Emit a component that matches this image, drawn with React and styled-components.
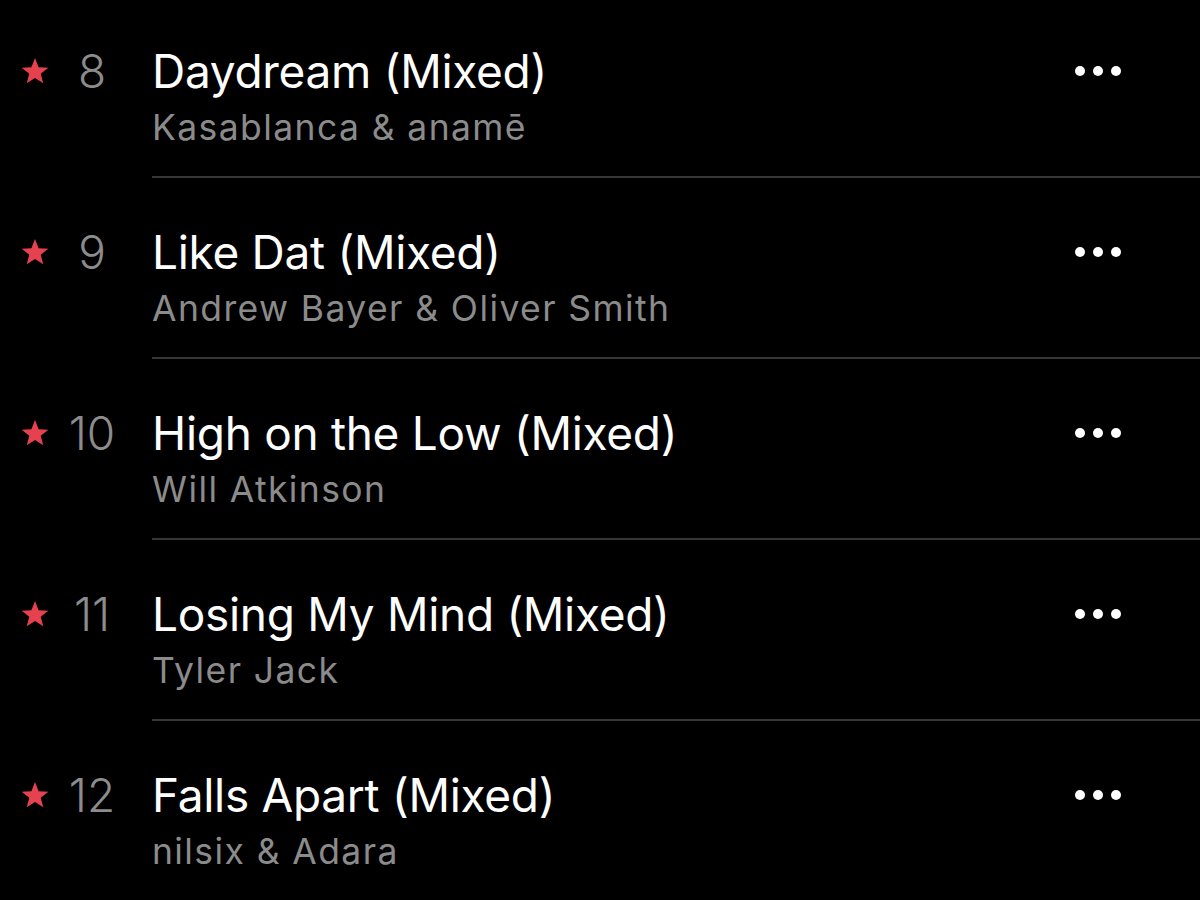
import styled, { createGlobalStyle } from "styled-components";

const GlobalStyle = createGlobalStyle`
  html, body {
    margin: 0;
    padding: 0;
    background: #000;
  }
  body {
    width: 1200px;
    height: 900px;
    overflow: hidden;
    font-family: Inter, "Noto Sans", sans-serif;
    -webkit-font-smoothing: antialiased;
  }
`;

const List = styled.div`
  margin-top: -3px;
  display: flex;
  flex-direction: column;
`;

const Row = styled.div`
  display: grid;
  grid-template-columns: 152px 1fr;
  height: 181px;
`;

const Lead = styled.div`
  display: flex;
  align-items: center;
  height: 56px;
  margin-top: 46px;
  padding-left: 19px;
`;

const Star = styled.svg`
  width: 32px;
  height: 32px;
  flex: none;
  fill: #e5414f;
`;

const TrackNo = styled.span`
  width: 60px;
  margin-left: 11px;
  text-align: center;
  font-size: 46px;
  font-weight: 300;
  color: #8c8c8c;
`;

const Body = styled.div`
  display: flex;
  flex-direction: column;
  padding-top: 46px;
  border-bottom: 2px solid #363636;
`;

const Head = styled.div`
  display: flex;
  align-items: center;
  justify-content: space-between;
  padding-right: 79px;
`;

const Title = styled.div`
  font-size: 46px;
  line-height: 56px;
  color: #fff;
  letter-spacing: -0.3px;
`;

const Artist = styled.div`
  margin-top: 7px;
  font-size: 35.5px;
  line-height: 44px;
  color: #8b8b8b;
  letter-spacing: 1.4px;
`;

const More = styled.div`
  display: flex;
  gap: 8px;
`;

const Dot = styled.span`
  width: 10px;
  height: 10px;
  border-radius: 50%;
  background: #fff;
`;

const tracks = [
  { no: 8, title: "Daydream (Mixed)", artist: "Kasablanca & anamē" },
  { no: 9, title: "Like Dat (Mixed)", artist: "Andrew Bayer & Oliver Smith" },
  { no: 10, title: "High on the Low (Mixed)", artist: "Will Atkinson" },
  { no: 11, title: "Losing My Mind (Mixed)", artist: "Tyler Jack" },
  { no: 12, title: "Falls Apart (Mixed)", artist: "nilsix & Adara" },
];

const StarIcon = () => (
  <Star viewBox="0 0 24 24">
    <path d="M12 2.2l2.7 6.9 7.3.4-5.7 4.6 1.9 7.1L12 17.2l-6.2 4 1.9-7.1L2 9.5l7.3-.4z" />
  </Star>
);

export default function App() {
  return (
    <>
      <GlobalStyle />
      <List>
        {tracks.map((t) => (
          <Row key={t.no}>
            <Lead>
              <StarIcon />
              <TrackNo>{t.no}</TrackNo>
            </Lead>
            <Body>
              <Head>
                <Title>{t.title}</Title>
                <More>
                  <Dot />
                  <Dot />
                  <Dot />
                </More>
              </Head>
              <Artist>{t.artist}</Artist>
            </Body>
          </Row>
        ))}
      </List>
    </>
  );
}
